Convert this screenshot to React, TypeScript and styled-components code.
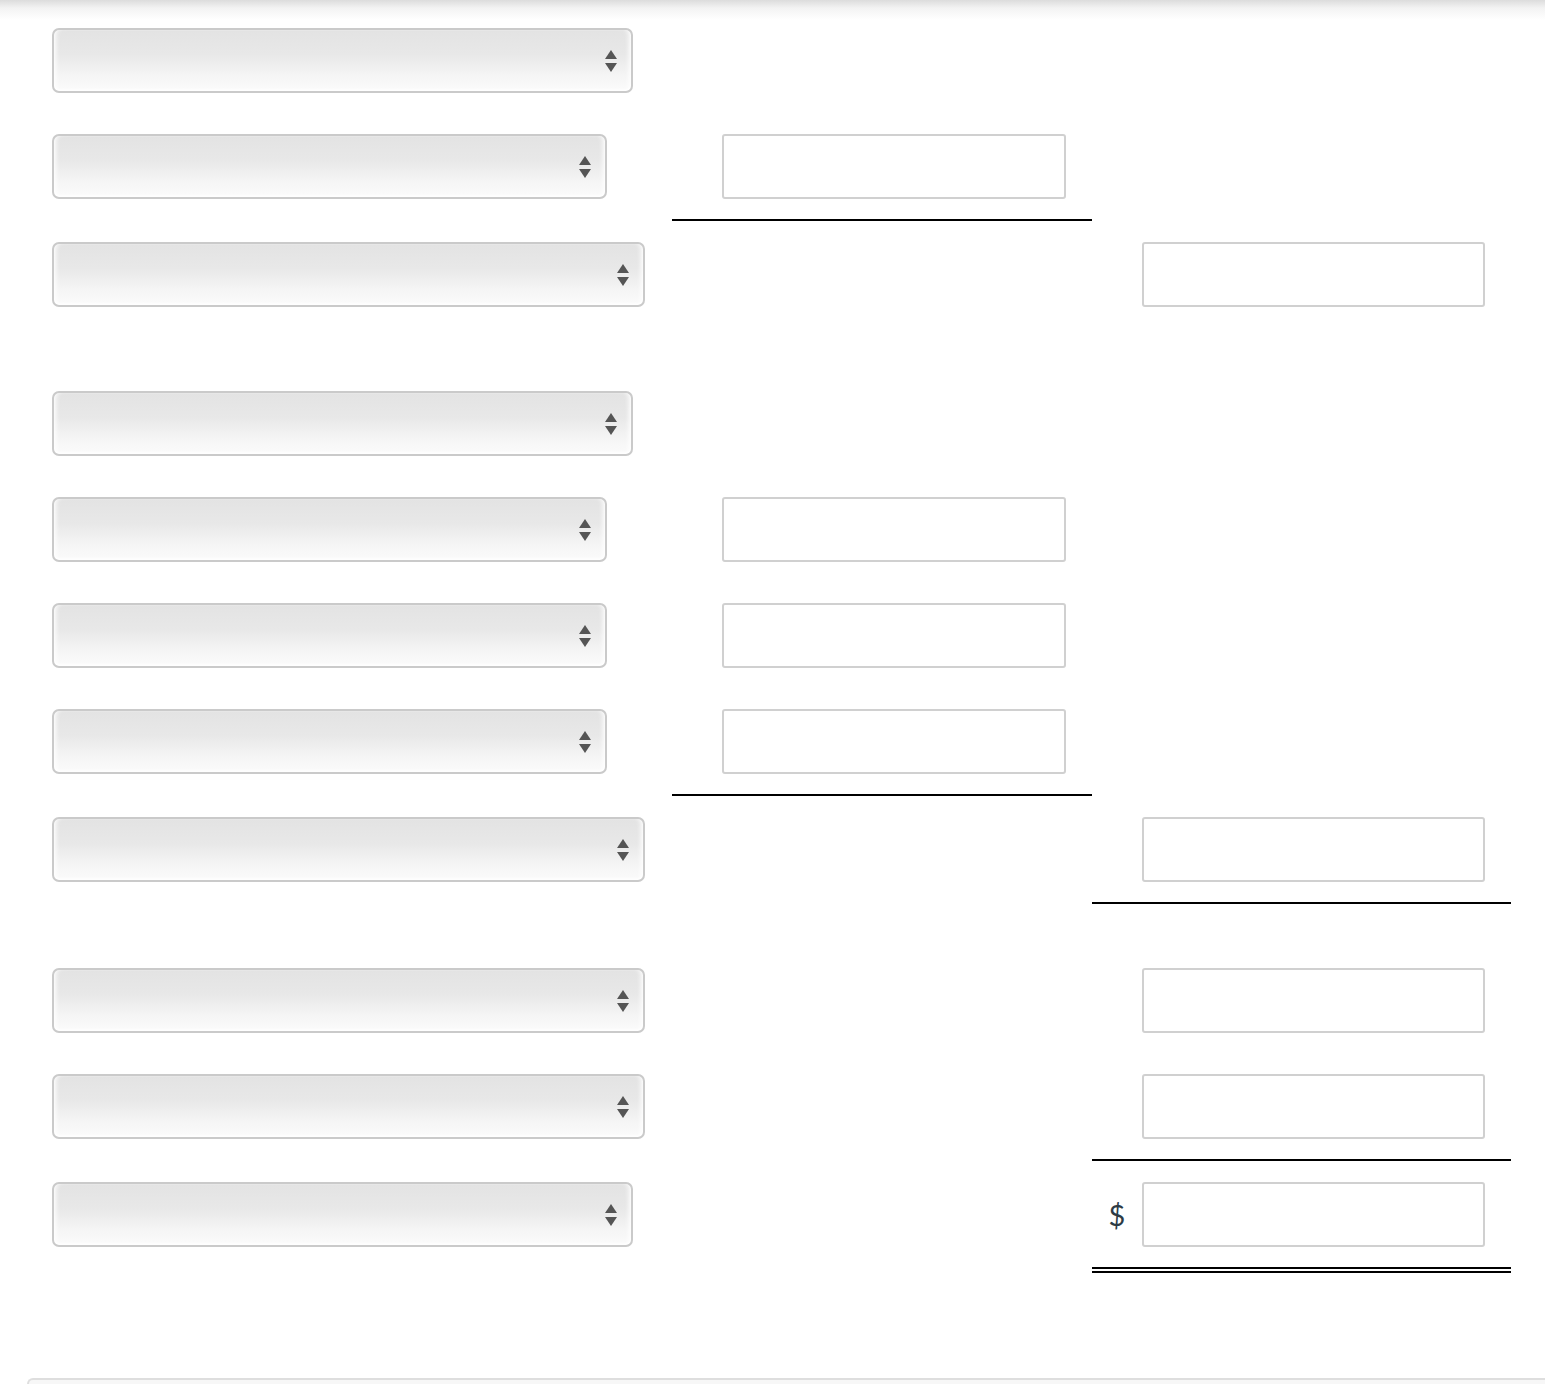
import React from "react";
import styled, { createGlobalStyle } from "styled-components";

const GlobalStyle = createGlobalStyle`
  html, body {
    margin: 0;
    padding: 0;
    background: #ffffff;
    font-family: Lato, "Open Sans", "Liberation Sans", sans-serif;
    color: #2d3b45;
  }
  * { box-sizing: border-box; }
`;

const Page = styled.div`
  width: 1545px;
  height: 1384px;
  overflow: hidden;
  padding-top: 7px;
  background: linear-gradient(to bottom, #dcdcdc 0px, #f3f3f3 8px, #ffffff 20px);
  display: flex;
  flex-direction: column;
`;

const Sheet = styled.div`
  margin-left: 27px;
  display: flex;
  flex-direction: column;
`;

const Row = styled.div`
  display: grid;
  grid-template-columns: 645px 420px 419px;
  align-items: stretch;
`;

const Spacer = styled.div`
  height: 43px;
`;

type Rule = "none" | "single" | "double";

const Cell = styled.div<{ $rule?: Rule; $pad?: number }>`
  min-height: 106px;
  padding: 21px 0 20px ${(p) => p.$pad ?? 50}px;
  display: flex;
  align-items: flex-start;
  border-bottom: ${(p) =>
    p.$rule === "single"
      ? "2px solid #000"
      : p.$rule === "double"
      ? "6px double #000"
      : "0 none"};
`;

const SelectBox = styled.div<{ $w: number }>`
  width: ${(p) => p.$w}px;
  height: 65px;
  border: 2px solid #cacaca;
  border-radius: 7px;
  background: linear-gradient(to bottom, #e3e3e3 0%, #e8e8e8 40%, #f5f5f5 75%, #fbfbfb 100%);
  box-shadow: inset 5px 0 5px -3px rgba(255, 255, 255, 0.95),
    inset -5px 0 5px -3px rgba(255, 255, 255, 0.95),
    inset 0 -2px 2px rgba(255, 255, 255, 0.8);
  display: flex;
  align-items: center;
  justify-content: flex-end;
  padding-right: 14px;
`;

const Arrows = styled.span`
  display: flex;
  flex-direction: column;
  align-items: center;
  gap: 4px;
`;

const Up = styled.span`
  width: 0;
  height: 0;
  border-left: 6px solid transparent;
  border-right: 6px solid transparent;
  border-bottom: 9px solid #555555;
`;

const Down = styled.span`
  width: 0;
  height: 0;
  border-left: 6px solid transparent;
  border-right: 6px solid transparent;
  border-top: 9px solid #555555;
`;

const TextInput = styled.div<{ $w?: number }>`
  width: ${(p) => p.$w ?? 344}px;
  height: 65px;
  border: 2px solid #d0d0d0;
  border-radius: 3px;
  background: #fff;
`;

const Dollar = styled.span`
  width: 50px;
  height: 65px;
  display: flex;
  align-items: center;
  justify-content: center;
  font-size: 29px;
  color: #2d3b45;
`;

const Footer = styled.div`
  margin-top: auto;
  margin-left: 27px;
  height: 6px;
  border-top: 2px solid #dedede;
  border-left: 2px solid #dedede;
  border-top-left-radius: 6px;
  background: #f7f7f7;
`;

const Select = ({ w }: { w: number }) => (
  <SelectBox $w={w}>
    <Arrows>
      <Up />
      <Down />
    </Arrows>
  </SelectBox>
);

type RowSpec = {
  sel: number;
  mid?: boolean;
  midRule?: Rule;
  right?: boolean;
  rightRule?: Rule;
  dollar?: boolean;
};

const groups: RowSpec[][] = [
  [
    { sel: 581 },
    { sel: 555, mid: true, midRule: "single" },
    { sel: 593, right: true },
  ],
  [
    { sel: 581 },
    { sel: 555, mid: true },
    { sel: 555, mid: true },
    { sel: 555, mid: true, midRule: "single" },
    { sel: 593, right: true, rightRule: "single" },
  ],
  [
    { sel: 593, right: true },
    { sel: 593, right: true, rightRule: "single" },
    { sel: 581, right: true, rightRule: "double", dollar: true },
  ],
];

export default function App() {
  return (
    <>
      <GlobalStyle />
      <Page>
        <Sheet>
          {groups.map((g, gi) => (
            <React.Fragment key={gi}>
              {gi > 0 && <Spacer />}
              {g.map((r, ri) => (
                <Row key={ri}>
                  <Cell $pad={25}>
                    <Select w={r.sel} />
                  </Cell>
                  <Cell $rule={r.midRule}>{r.mid && <TextInput />}</Cell>
                  <Cell $rule={r.rightRule} $pad={r.dollar ? 0 : 50}>
                    {r.dollar && <Dollar>$</Dollar>}
                    {r.right && <TextInput $w={343} />}
                  </Cell>
                </Row>
              ))}
            </React.Fragment>
          ))}
        </Sheet>
        <Footer />
      </Page>
    </>
  );
}
